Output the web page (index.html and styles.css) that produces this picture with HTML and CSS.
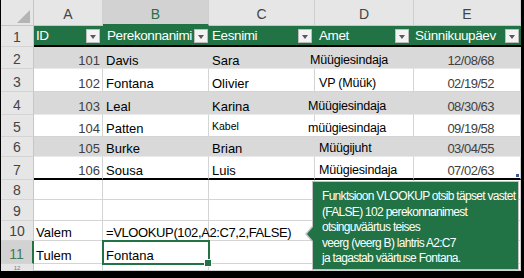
FILE: index.html
```html
<!DOCTYPE html>
<html lang="et">
<head>
<meta charset="utf-8">
<title>VLOOKUP</title>
<link rel="stylesheet" href="styles.css">
</head>
<body>
<div class="frame">
  <div class="sheet">
    <div class="row r-colhdr">
      <div class="corner"><span class="tri"></span></div>
      <div class="ch">A</div>
      <div class="ch sel">B</div>
      <div class="ch">C</div>
      <div class="ch">D</div>
      <div class="ch">E</div>
    </div>
    <div class="row r-head">
      <div class="rh">1</div>
      <div class="th pa"><span>ID</span><i class="dd"></i></div>
      <div class="th pb"><span>Perekonnanimi</span><i class="dd"></i></div>
      <div class="th pc"><span>Eesnimi</span><i class="dd"></i></div>
      <div class="th pd"><span>Amet</span><i class="dd"></i></div>
      <div class="th pe"><span>Sünnikuupäev</span><i class="dd"></i></div>
    </div>
    <div class="row r2 band">
      <div class="rh">2</div>
      <div class="c num">101</div>
      <div class="c nm">Davis</div>
      <div class="c fn">Sara</div>
      <div class="c job j-out">Müügiesindaja</div>
      <div class="c date">12/08/68</div>
    </div>
    <div class="row r3">
      <div class="rh">3</div>
      <div class="c num">102</div>
      <div class="c nm">Fontana</div>
      <div class="c fn">Olivier</div>
      <div class="c job j-in">VP (Müük)</div>
      <div class="c date">02/19/52</div>
    </div>
    <div class="row r4 band">
      <div class="rh">4</div>
      <div class="c num">103</div>
      <div class="c nm">Leal</div>
      <div class="c fn">Karina</div>
      <div class="c job j-out2">Müügiesindaja</div>
      <div class="c date">08/30/63</div>
    </div>
    <div class="row r5">
      <div class="rh">5</div>
      <div class="c num">104</div>
      <div class="c nm">Patten</div>
      <div class="c fn small">Kabel</div>
      <div class="c job j-out2"><span class="mask">müügiesindaja</span></div>
      <div class="c date">09/19/58</div>
    </div>
    <div class="row r6 band">
      <div class="rh">6</div>
      <div class="c num">105</div>
      <div class="c nm">Burke</div>
      <div class="c fn">Brian</div>
      <div class="c job j-in">Müügijuht</div>
      <div class="c date">03/04/55</div>
    </div>
    <div class="row r7 last">
      <div class="rh">7</div>
      <div class="c num">106</div>
      <div class="c nm">Sousa</div>
      <div class="c fn">Luis</div>
      <div class="c job j-in">Müügiesindaja</div>
      <div class="c date resize">07/02/63</div>
    </div>
    <div class="row r8">
      <div class="rh">8</div>
      <div class="c"></div><div class="c"></div><div class="c"></div><div class="c"></div><div class="c"></div>
    </div>
    <div class="row r9">
      <div class="rh">9</div>
      <div class="c"></div><div class="c"></div><div class="c"></div><div class="c"></div><div class="c"></div>
    </div>
    <div class="row r10">
      <div class="rh">10</div>
      <div class="c lbl">Valem</div>
      <div class="c nm formula">=VLOOKUP(102,A2:C7,2,FALSE)</div>
      <div class="c"></div><div class="c"></div><div class="c"></div>
    </div>
    <div class="row r11">
      <div class="rh rsel">11</div>
      <div class="c lbl">Tulem</div>
      <div class="c nm active">Fontana</div>
      <div class="c"></div><div class="c"></div><div class="c"></div>
    </div>
    <div class="row r12">
      <div class="rh rh12">12</div>
      <div class="c"></div><div class="c"></div><div class="c"></div><div class="c"></div><div class="c"></div>
    </div>
  </div>
  <div class="callout">
    <p>Funktsioon VLOOKUP otsib täpset vastet</p>
    <p>(FALSE) 102 perekonnanimest</p>
    <p>otsinguväärtus teises</p>
    <p>veerg (veerg B) lahtris A2:C7</p>
    <p>ja tagastab väärtuse Fontana.</p>
  </div>
</div>
</body>
</html>
```
FILE: styles.css
```css
* { box-sizing: border-box; }
html, body { margin: 0; padding: 0; background: #fff; }
body { font-family: "Liberation Sans", Arial, sans-serif; }

.frame {
  position: relative;
  width: 524px;
  height: 278px;
  border-left: 1px solid #000;
  border-right: 3px solid #000;
  border-bottom: 7px solid #000;
  overflow: hidden;
  background: #fff;
}

.sheet { display: flex; flex-direction: column; }

.row {
  display: grid;
  grid-template-columns: 33px 69px 106px 106px 99px 107px;
}
.r-colhdr { height: 26px; }
.r-head { height: 21px; }
.r2 { height: 22px; }
.r3 { height: 23px; }
.r4 { height: 23px; }
.r5 { height: 22px; }
.r6 { height: 20px; }
.r7 { height: 23px; }
.r8 { height: 20px; }
.r9 { height: 21px; }
.r10 { height: 20px; }
.r11 { height: 23px; }
.r12 { height: 7px; }

/* column headers */
.corner {
  position: relative;
  background: #e6e6e6;
  border-right: 1px solid #c6c6c6;
  border-bottom: 1px solid #c6c6c6;
}
.tri {
  position: absolute;
  right: 3px;
  bottom: 2px;
  width: 0;
  height: 0;
  border-style: solid;
  border-width: 0 0 13px 13px;
  border-color: transparent transparent #b4b4b4 transparent;
}
.ch {
  background: #e6e6e6;
  border-right: 1px solid #cfcfcf;
  border-bottom: 1px solid #c6c6c6;
  color: #444;
  font-size: 14px;
  line-height: 16px;
  display: flex;
  align-items: flex-end;
  justify-content: center;
  padding-bottom: 3px;
}
.ch.sel {
  background: #d2d2d2;
  color: #2b6e45;
  border-bottom: 2px solid #217346;
  padding-bottom: 2px;
}

/* row headers */
.rh {
  background: #e6e6e6;
  border-right: 1px solid #c6c6c6;
  border-bottom: 1px solid #d4d4d4;
  color: #444;
  font-size: 14px;
  line-height: 16px;
  display: flex;
  align-items: flex-end;
  justify-content: center;
  padding-bottom: 1px;
}
.rh.rsel {
  background: #d2d2d2;
  color: #3f7a55;
  border-right: 2px solid #217346;
}
.rh.rh12 {
  align-items: flex-start;
  font-size: 6px;
  line-height: 6px;
  padding: 1px 0 0 0;
  border-bottom: 0;
  color: #777;
}

/* table header row */
.th {
  background: #217346;
  border-bottom: 2px solid #000;
  color: #fff;
  font-size: 13.5px;
  letter-spacing: -0.4px;
  line-height: 15px;
  display: flex;
  align-items: flex-end;
  justify-content: space-between;
  padding: 0 2px 1px 2px;
  white-space: nowrap;
}
.th span { padding-bottom: 1px; }
.th.pb { padding-left: 4px; padding-right: 1px; }
.th.pc { padding-left: 3px; padding-right: 3px; }
.th.pd { padding-left: 4px; padding-right: 5px; }
.th.pe { padding-left: 1px; padding-right: 2px; }
.th.pa { padding-right: 3px; }
.dd {
  display: block;
  position: relative;
  width: 14px;
  height: 14px;
  margin-bottom: 1px;
  background: #f3f3f3;
  border: 1px solid #bdbdbd;
  flex: none;
}
.dd::after {
  content: "";
  position: absolute;
  left: 3px;
  top: 5px;
  border-style: solid;
  border-width: 4px 3.5px 0 3.5px;
  border-color: #595959 transparent transparent transparent;
}

/* data cells */
.c {
  position: relative;
  border-right: 1px solid #d4d4d4;
  border-bottom: 1px solid #d4d4d4;
  color: #000;
  font-size: 13px;
  line-height: 15px;
  display: flex;
  align-items: flex-end;
  padding: 0 3px 0 3px;
  white-space: nowrap;
}
.band .c {
  background: #d9d9d9;
  border-right-color: #d9d9d9;
  border-bottom-color: #e9e9e9;
}
.last .c { border-bottom: 2px solid #000; }

.num { justify-content: flex-end; color: #404040; padding-right: 2px; }
.nm { padding-left: 3px; }
.fn { padding-left: 3px; }
.small { font-size: 10.5px; padding-bottom: 2px; }
.job { font-size: 12.5px; letter-spacing: -0.2px; }
.j-out { margin-left: -8px; }
.j-out2 { margin-left: -10px; }
.j-in { padding-left: 4px; }
.mask { background: #fff; }
.date {
  justify-content: flex-end;
  color: #404040;
  padding-right: 26px;
  letter-spacing: -0.5px;
}
.resize::after {
  content: "";
  position: absolute;
  right: 1px;
  bottom: 1px;
  width: 3px;
  height: 3px;
  background: #3b5a9a;
}

.lbl { padding-left: 2px; }
.formula { letter-spacing: -0.38px; }

.active {
  outline: 2px solid #217346;
  outline-offset: -1px;
  z-index: 2;
}
.active::after {
  content: "";
  position: absolute;
  right: -4px;
  bottom: -4px;
  width: 6px;
  height: 6px;
  background: #217346;
  border: 1px solid #fff;
}

/* callout */
.callout {
  position: absolute;
  left: 311px;
  top: 181px;
  width: 207px;
  height: 89px;
  background: #217346;
  border: 1px solid #c3c3c3;
  color: #fff;
  font-size: 12px;
  line-height: 15.5px;
  letter-spacing: -0.7px;
  padding: 7px 0 0 9px;
  z-index: 3;
}
.callout p { margin: 0; white-space: nowrap; }
.callout::before {
  content: "";
  position: absolute;
  left: -8px;
  top: 44px;
  border-style: solid;
  border-width: 8px 7px 8px 0;
  border-color: transparent #c3c3c3 transparent transparent;
}
.callout::after {
  content: "";
  position: absolute;
  left: -6px;
  top: 45px;
  border-style: solid;
  border-width: 7px 6px 7px 0;
  border-color: transparent #217346 transparent transparent;
}
```
